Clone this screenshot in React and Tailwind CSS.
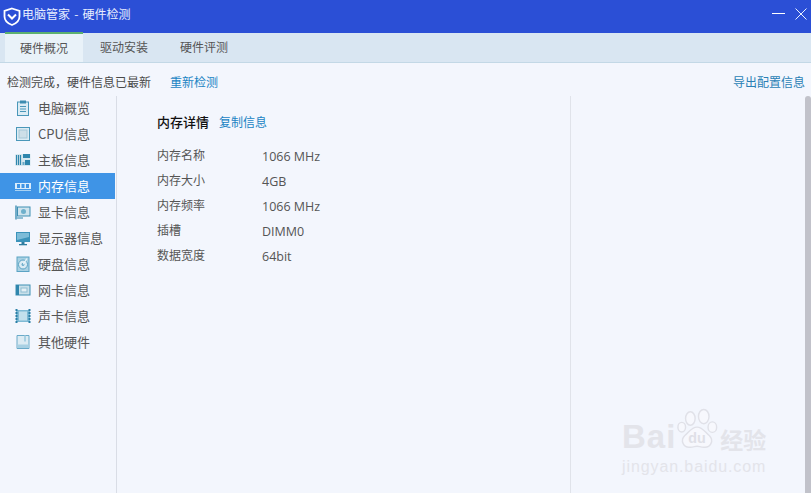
import React from "react";

const cjk = { fontFamily: '"Noto Sans CJK SC", sans-serif' };

const Ic = ({ children }) => (
  <svg width="16" height="16" viewBox="0 0 16 16" fill="none" className="shrink-0">{children}</svg>
);

const icons = [
  <Ic><rect x="2.5" y="2" width="11" height="13.5" fill="#dcecf4" stroke="#4a97b9" /><rect x="5" y="0.5" width="6" height="3" fill="#3d8cb0" /><path d="M5 6.5h6M5 9h6M5 11.5h6" stroke="#4a97b9" /></Ic>,
  <Ic><rect x="1.5" y="1.5" width="13" height="13" fill="#dcecf4" stroke="#4a97b9" /><rect x="4" y="4" width="8" height="8" fill="#cddfe8" stroke="#a6c7d7" /></Ic>,
  <Ic><rect x="0.5" y="2" width="15" height="12" fill="#d5e6ee" /><path d="M1.5 3v10M3.5 3v10M5.5 3v10" stroke="#2f86ad" strokeWidth="1.2" /><rect x="8" y="2" width="7" height="4" fill="#2f86ad" /><rect x="10" y="8" width="5" height="5" fill="#2f86ad" /><rect x="7.5" y="10" width="2" height="3" fill="#6aa9c6" /></Ic>,
  <Ic><rect x="0" y="5" width="16" height="6" fill="#d9ecfb" /><rect x="2" y="6" width="3" height="4" fill="#3f94e6" /><rect x="6.5" y="6" width="3" height="4" fill="#3f94e6" /><rect x="11" y="6" width="3" height="4" fill="#3f94e6" /><path d="M0 12.5h16" stroke="#a9d2f3" /></Ic>,
  <Ic><path d="M1 1.5v14" stroke="#2f86ad" strokeWidth="1.3" /><rect x="2.5" y="3" width="12.5" height="9" fill="#cfe4ee" stroke="#3f8fb3" /><circle cx="8.5" cy="7.5" r="2.5" fill="#6fb0cc" /><path d="M2 14h6" stroke="#2f86ad" /></Ic>,
  <Ic><rect x="1" y="2" width="14" height="10" fill="#3b93ba" /><path d="M2 3h12v4L2 10z" fill="#7dbcd8" /><rect x="6.5" y="12" width="3" height="2" fill="#2f7da0" /><rect x="4" y="14" width="8" height="1.3" fill="#2f7da0" /></Ic>,
  <Ic><rect x="2" y="1" width="12" height="14.5" fill="#a9d1e3" stroke="#5ba3c4" /><circle cx="8" cy="8.5" r="4.5" fill="#dbecf4" stroke="#5ba3c4" /><circle cx="8" cy="8.5" r="1.4" fill="#5ba3c4" /><path d="M8 8.5 12 2.5" stroke="#eaf5fa" strokeWidth="1.2" /></Ic>,
  <Ic><rect x="1" y="3" width="14" height="10" fill="#c9e0ea" stroke="#3f8fb3" /><rect x="1" y="3" width="3" height="10" fill="#2f86ad" /><rect x="6" y="6" width="6" height="4" fill="#e4f0f5" stroke="#8fbdd2" /></Ic>,
  <Ic><rect x="1" y="2" width="14" height="12" fill="#7fbad5" /><rect x="4" y="3.5" width="8" height="9" fill="#c3e0ed" /><path d="M1.5 1v14M14.5 1v14" stroke="#2b7fa6" strokeWidth="2" strokeDasharray="2 1" /></Ic>,
  <Ic><path d="M2 1.5h12v13H2z" fill="#dcebf3" stroke="#6aaac9" /><path d="M2.5 10.5h11v3.5h-11z" fill="#a8d0e3" /><path d="M10 1.5v6" stroke="#a8d0e3" strokeWidth="2" /></Ic>,
];

const menu = ["电脑概览", "CPU信息", "主板信息", "内存信息", "显卡信息", "显示器信息", "硬盘信息", "网卡信息", "声卡信息", "其他硬件"];
const rows = [
  ["内存名称", "1066 MHz"],
  ["内存大小", "4GB"],
  ["内存频率", "1066 MHz"],
  ["插槽", "DIMM0"],
  ["数据宽度", "64bit"],
];

export default function App() {
  return (
    <div className="relative flex h-[493px] w-[811px] flex-col overflow-hidden bg-[#f3f6fd] text-[12.5px] text-[#555]" style={cjk}>
      <header className="flex h-[33px] shrink-0 items-center justify-between bg-[#2b4fd6] pl-[3px] pr-[4px]">
        <div className="flex items-center gap-[1px]">
          <svg width="18" height="19" viewBox="0 0 18 19" fill="none">
            <path d="M9 1.5 16.5 4v5.5c0 4-3.5 7-7.5 8.5-4-1.5-7.5-4.5-7.5-8.5V4z" stroke="#fff" strokeWidth="1.8" />
            <path d="M5 7.5 9 11.5l4-4" stroke="#fff" strokeWidth="2" />
          </svg>
          <span className="mb-[5px] text-[12px] text-[#e8eeff] [word-spacing:1.5px]">电脑管家 - 硬件检测</span>
        </div>
        <div className="mb-[6px] flex items-center gap-[10px]">
          <svg width="13" height="3" viewBox="0 0 13 3"><path d="M0 1.5h13" stroke="#fff" /></svg>
          <svg width="12" height="12" viewBox="0 0 12 12"><path d="M0.5 0.5l11 11M11.5 0.5l-11 11" stroke="#e8f0ff" /></svg>
        </div>
      </header>

      <nav className="flex h-[30px] shrink-0 items-end border-b border-[#c3d8e6] bg-[#d9e6f2] pl-[5px] text-[12px] text-[#555]">
        <div className="flex h-[30px] w-[78px] items-center justify-center border-t-2 border-[#5cb070] bg-[#e9f2f9]">硬件概况</div>
        <div className="flex h-[30px] w-[82px] items-center justify-center">驱动安装</div>
        <div className="flex h-[30px] w-[78px] items-center justify-center">硬件评测</div>
      </nav>

      <div className="flex h-[33px] shrink-0 items-center justify-between pl-[7px] pr-[6px] pt-[4px] text-[12px]">
        <div className="flex items-center">
          <span className="w-[163px] text-[#4a4a4a]">检测完成，硬件信息已最新</span>
          <span className="text-[#1a84c4]">重新检测</span>
        </div>
        <span className="text-[#2a7fb5]">导出配置信息</span>
      </div>

      <div className="flex min-h-0 flex-1">
        <aside className="w-[117px] shrink-0 border-r border-[#d9dde6] pr-px">
          <div className="-mt-px flex flex-col">
            {menu.map((m, i) => (
              <div key={m} className={`flex h-[26px] items-center gap-[7px] pl-[15px] text-[13px] ${i === 3 ? "bg-[#3f94e6] text-white" : "text-[#555]"}`}>
                {icons[i]}
                <span className="mb-px">{m}</span>
              </div>
            ))}
          </div>
        </aside>

        <main className="w-[454px] shrink-0 border-r border-[#e0e3ea] pl-[40px] pt-[16px]">
          <div className="flex h-[20px] items-center">
            <span className="w-[62px] text-[13px] font-medium text-[#111]">内存详情</span>
            <span className="text-[12px] text-[#1a84c4]">复制信息</span>
          </div>
          <div className="mt-[13px] flex flex-col">
            {rows.map(([k, v]) => (
              <div key={k} className="flex h-[25px] items-center text-[12px]">
                <span className="mb-[5px] w-[105px] text-[#555]">{k}</span>
                <span className="text-[12.5px] text-[#555]" style={{ fontFamily: '"Open Sans", sans-serif' }}>{v}</span>
              </div>
            ))}
          </div>
        </main>

        <div className="flex-1" />
        <div className="w-[6px] shrink-0 self-stretch rounded-t-[3px] bg-[#c1c2ca]" />
      </div>

      <div className="pointer-events-none absolute left-[622px] top-[407px] w-[150px] text-[#e3e4ea]">
        <div className="flex items-end">
          <span className="mb-[-2px] text-[33px] font-bold leading-[36px] tracking-[1px]" style={{ fontFamily: '"Liberation Sans", sans-serif' }}>Bai</span>
          <svg width="44" height="46" viewBox="0 0 46 46" className="shrink-0" fill="#f7f8fd" stroke="#e0e1e8" strokeWidth="1.5">
            <ellipse cx="15" cy="11" rx="5" ry="7" />
            <ellipse cx="29" cy="9" rx="5.5" ry="7.5" />
            <ellipse cx="38" cy="20" rx="4.5" ry="5.5" />
            <ellipse cx="6" cy="20" rx="4" ry="5" />
            <path d="M22 20c6 0 8 5 13 9 5 5 1 13-6 12-3 0-5-1-7-1s-4 1-7 1c-7 1-11-7-6-12 5-4 7-9 13-9z" />
            <text x="22" y="37" textAnchor="middle" fontSize="15" fontWeight="700" stroke="none" fill="#dfe0e7" fontFamily="Liberation Sans">du</text>
          </svg>
          <span className="mb-[1px] shrink-0 text-[23px] font-bold leading-[26px]">经验</span>
        </div>
        <div className="mt-[6px] whitespace-nowrap text-[16px] leading-[16px] tracking-[0.9px]" style={{ fontFamily: '"Liberation Sans", sans-serif' }}>jingyan.baidu.com</div>
      </div>
    </div>
  );
}
